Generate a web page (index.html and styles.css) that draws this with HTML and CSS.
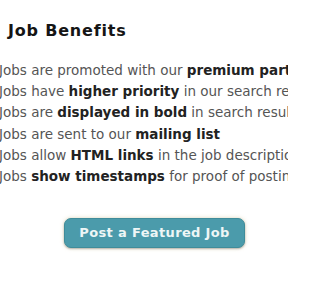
FILE: index.html
```html
<!DOCTYPE html>
<html>
<head>
<meta charset="utf-8">
<link rel="stylesheet" href="styles.css">
</head>
<body>
<div class="page">
  <h2 class="title">Job Benefits</h2>
  <ul class="list">
    <li>Jobs are promoted with our <b>premium partners</b></li>
    <li>Jobs have <b>higher priority</b> in our search results</li>
    <li>Jobs are <b>displayed in bold</b> in search results</li>
    <li>Jobs are sent to our <b>mailing list</b></li>
    <li>Jobs allow <b>HTML links</b> in the job description</li>
    <li>Jobs <b>show timestamps</b> for proof of posting</li>
  </ul>
  <div class="actions">
    <a class="btn" href="#">Post a Featured Job</a>
  </div>
</div>
</body>
</html>
```
FILE: styles.css
```css
html, body {
  margin: 0;
  padding: 0;
  background: #fff;
  overflow: hidden;
}
.page {
  width: 288px;
  height: 288px;
  font-family: "DejaVu Sans", Verdana, sans-serif;
  overflow: hidden;
}
.title {
  margin: 0;
  padding: 21px 0 0 8px;
  font-size: 16px;
  line-height: 20px;
  font-weight: bold;
  letter-spacing: 0.8px;
  color: #151515;
  white-space: nowrap;
}
.list {
  list-style: none;
  margin: 0 0 0 -1px;
  padding: 19px 0 0 0;
}
.list li {
  font-size: 13.5px;
  line-height: 21.2px;
  color: #555;
  white-space: nowrap;
}
.list b {
  color: #222;
}
.actions {
  display: flex;
  padding-left: 64px;
  padding-top: 31px;
}
.btn {
  display: block;
  width: 181px;
  height: 30px;
  box-sizing: border-box;
  background: #4b9bab;
  border: 1px solid #3f8c9a;
  border-radius: 7px;
  box-shadow: 0 1px 2px rgba(0,0,0,0.25), 0 0 4px rgba(190,180,120,0.45);
  color: #eef6f6;
  font-weight: bold;
  font-size: 13px;
  letter-spacing: 0.35px;
  line-height: 28px;
  text-align: center;
  text-decoration: none;
}
```
